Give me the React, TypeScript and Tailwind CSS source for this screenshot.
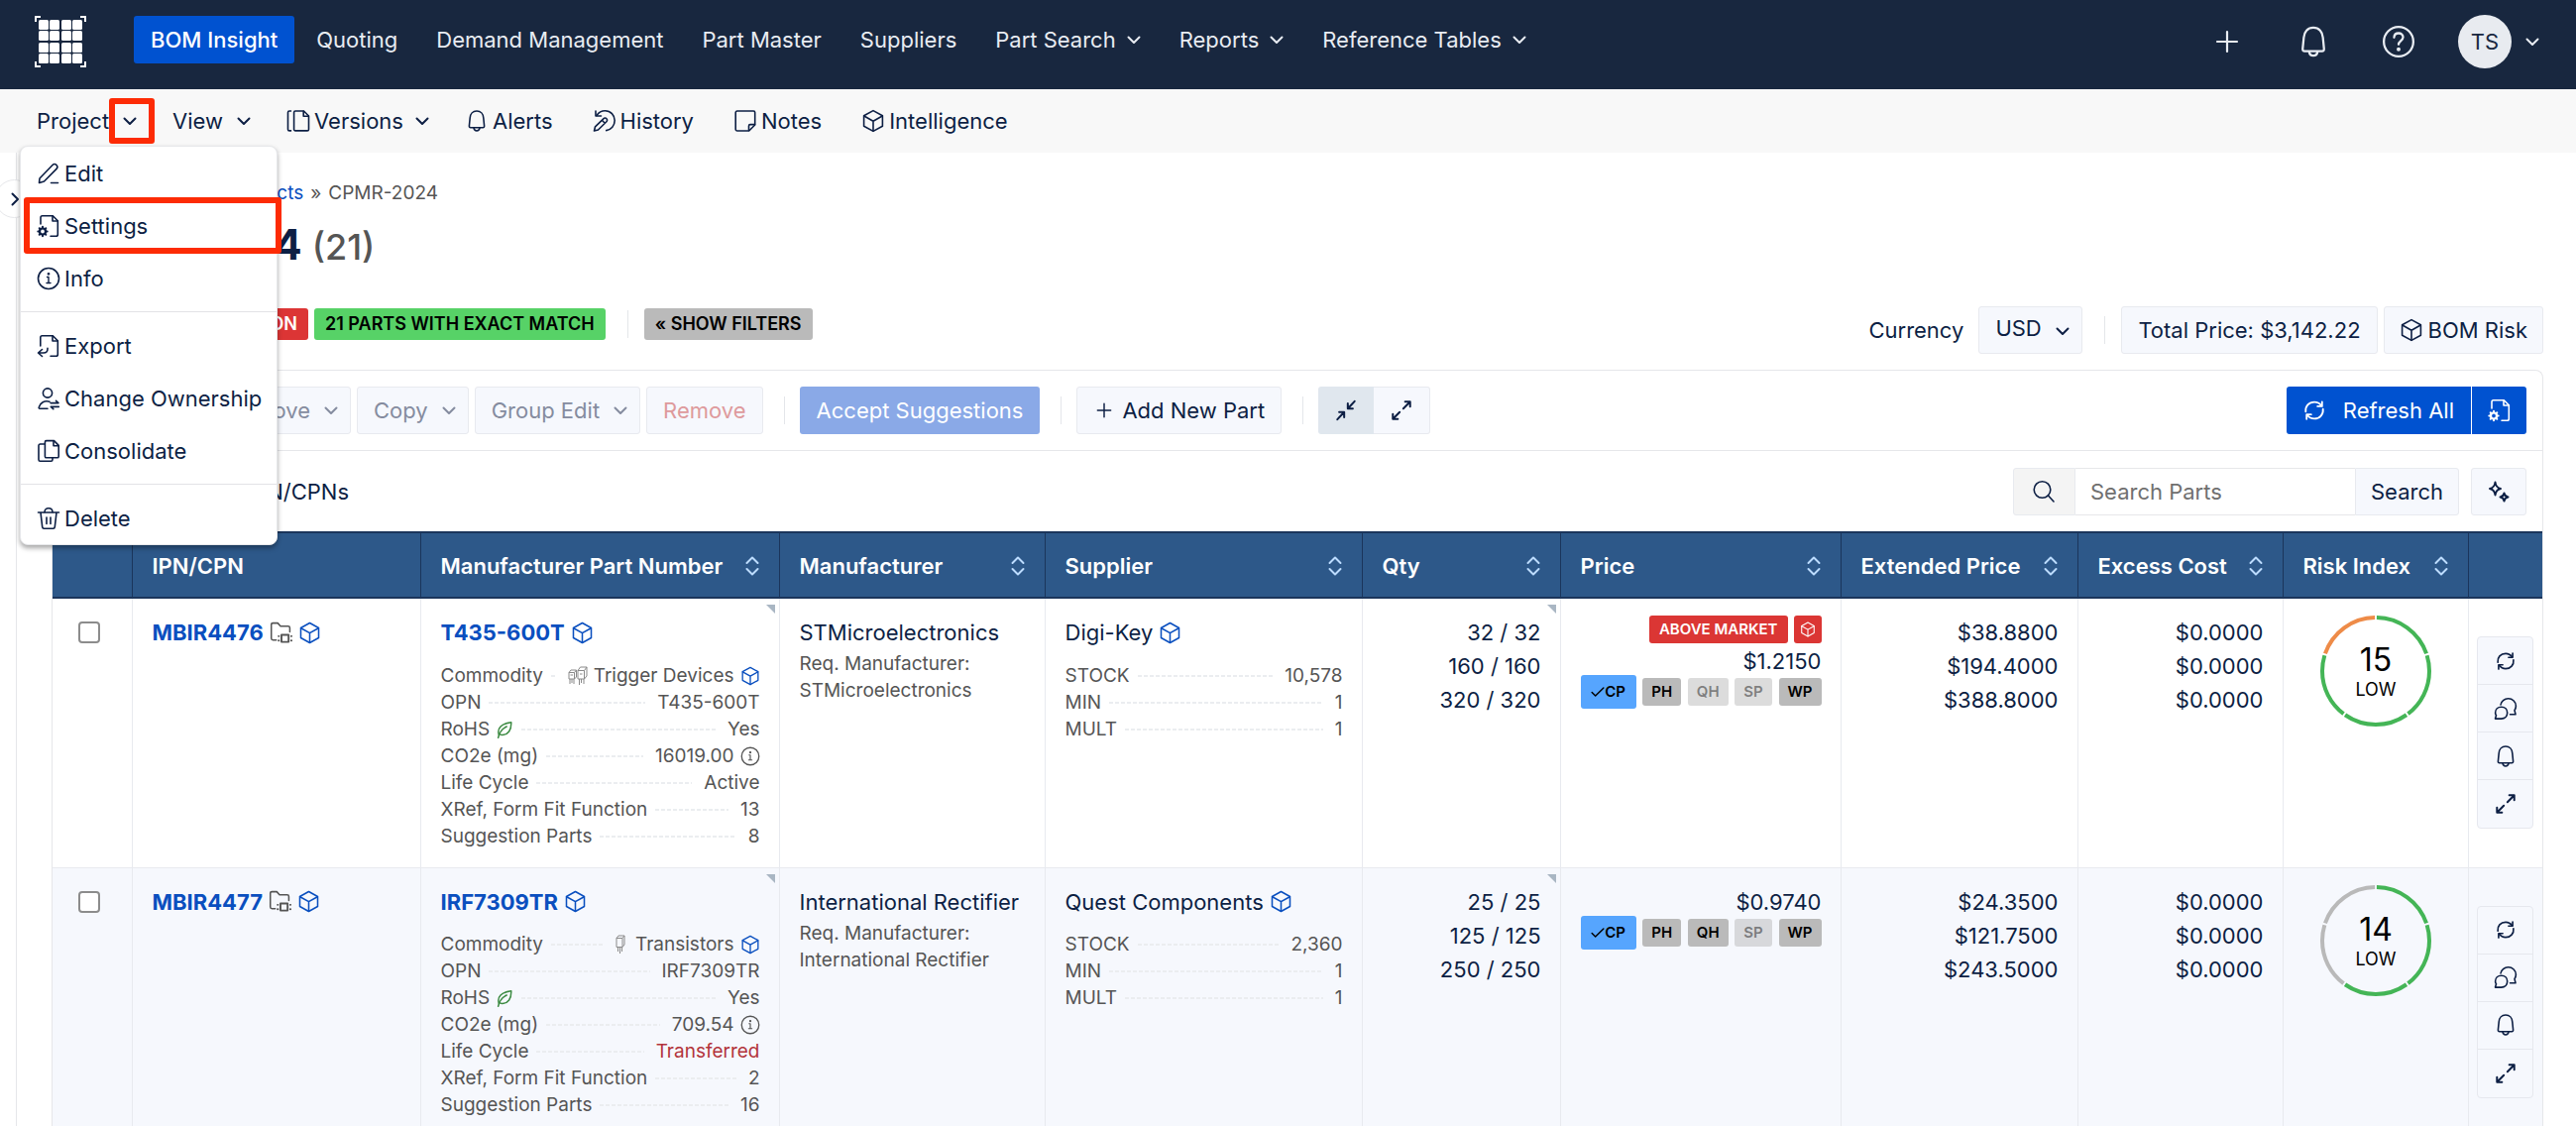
import type { ReactNode } from 'react'

type IconProps = { className?: string }

function Icon({ className = 'size-6', children }: { className?: string; children: ReactNode }) {
  return (
    <svg
      viewBox="0 0 24 24"
      fill="none"
      stroke="currentColor"
      strokeWidth="1.6"
      strokeLinecap="round"
      strokeLinejoin="round"
      aria-hidden="true"
      className={`shrink-0 ${className}`}
    >
      {children}
    </svg>
  )
}

function Chevron({ className = '' }: IconProps) {
  return (
    <svg viewBox="0 0 14 14" fill="none" stroke="currentColor" strokeWidth="2" strokeLinecap="round" strokeLinejoin="round" aria-hidden="true" className={`size-[14px] shrink-0 ${className}`}>
      <path d="M1.500 4.500 7 10l5.500-5.500" />
    </svg>
  )
}

const Cube = ({ className }: IconProps) => (
  <Icon className={className}>
    <path d="M12 1.600 21.400 6.800v10.400L12 22.400 2.600 17.200V6.800z" />
    <path d="M2.800 7 12 12.200 21.200 7M12 12.200v10" />
  </Icon>
)

const Bell = ({ className }: IconProps) => (
  <Icon className={className}>
    <path d="M12 2c-4 0-6.600 3-6.800 7l-.8 8c-.1 1.200.4 1.800 1.400 1.800h12.400c1 0 1.500-.6 1.400-1.800l-.8-8C18.600 5 16 2 12 2z" />
    <path d="M9 19.200c.3 1.800 1.500 2.800 3 2.800s2.700-1 3-2.800" />
  </Icon>
)

const Info = ({ className }: IconProps) => (
  <Icon className={className}>
    <circle cx="12" cy="12" r="10.500" />
    <path d="M10.500 10.500H12v6M10 16.500h4" strokeWidth="1.400" />
    <circle cx="12" cy="7.300" r=".6" fill="currentColor" />
  </Icon>
)

const Pencil = ({ className }: IconProps) => (
  <Icon className={className}>
    <path d="m3 17 13-13.500c1.200-1.200 2.800-1.200 4 0 1.100 1.100 1.100 2.700 0 3.900L7.500 20 2.500 21.400z" />
    <path d="M14.500 21.500h7" />
  </Icon>
)

const FileGear = ({ className }: IconProps) => (
  <Icon className={className}>
    <path d="M4 10V3.500C4 2.500 4.700 1.800 5.700 1.800h10.600l5 5v13.700c0 1-.7 1.800-1.700 1.800H14" />
    <path d="M16 2v5h5.200" />
    <circle cx="6" cy="17.500" r="3" strokeWidth="2.200" />
    <path d="M6 12.800v1.400M6 20.800v1.400M1.300 17.500h1.400M9.300 17.500h1.400M2.700 14.200l1 1M8.300 19.800l1 1M9.300 14.200l-1 1M3.700 19.800l-1 1" strokeWidth="2" />
  </Icon>
)

const FileExport = ({ className }: IconProps) => (
  <Icon className={className}>
    <path d="M3.800 12V3.500c0-1 .7-1.700 1.700-1.700h10.800l5 5v13.700c0 1-.7 1.800-1.700 1.800H14" />
    <path d="M16 2v5h5.200" />
    <path d="M5.500 15.500 1.500 19l4 3.500M1.800 19H7c2.500 0 4-1.500 4-4v-.8" />
  </Icon>
)

const UserSwap = ({ className }: IconProps) => (
  <Icon className={className}>
    <circle cx="11" cy="6.500" r="4.600" />
    <path d="M13 15.200c-5-1.300-9.500.8-10.800 5.800-.2.700.2 1.200.9 1.200H11" />
    <path d="M14 16.600h8l-2.500-2.200M22.300 20.400h-8l2.500 2.200" />
  </Icon>
)

const Copies = ({ className }: IconProps) => (
  <Icon className={className}>
    <path d="M9.800 1.600h7.700l4.700 4.800v11c0 .8-.6 1.400-1.400 1.400H9.800c-.8 0-1.400-.6-1.400-1.400V3c0-.8.6-1.400 1.400-1.400z" />
    <path d="M17 2v4.800h5" />
    <path d="M8 5H3.500C2.700 5 2 5.700 2 6.500v14.300c0 .8.700 1.500 1.500 1.500h11c.8 0 1.500-.7 1.500-1.500V19" />
  </Icon>
)

const Trash = ({ className }: IconProps) => (
  <Icon className={className}>
    <path d="M1.500 6h21M4 6.200l1.700 14.500c.1.900.8 1.500 1.700 1.500h9.200c.9 0 1.600-.6 1.700-1.500L20 6.200" />
    <path d="M8 5.800c0-2.500 1.600-4 4-4s4 1.500 4 4M10 11v6.500M14 11v6.500" />
  </Icon>
)

const Versions = ({ className }: IconProps) => (
  <Icon className={className}>
    <path d="M9 2h8.500l5 5v13.500c0 .8-.6 1.400-1.400 1.400H9c-.8 0-1.400-.6-1.400-1.400v-17C7.600 2.600 8.200 2 9 2z" />
    <path d="M17.200 2.300v5h5M4.500 2H3c-.8 0-1.500.6-1.500 1.500v17c0 .8.700 1.400 1.500 1.400h1.500" />
  </Icon>
)

const History = ({ className }: IconProps) => (
  <Icon className={className}>
    <path d="M4 6.500C6 3.500 9 1.800 12.500 1.800c5.500 0 9.700 4.300 9.700 9.800 0 5-3.500 9.300-8.500 10" />
    <path d="M3 2v5h5.500" />
    <path d="m2.500 17.800 8.300-8c1-1 2.300-1 3.200 0 .8.800.8 2.100-.1 3L5.500 21l-4 1zM9.500 11.500l2.800 2.800" />
  </Icon>
)

const Note = ({ className }: IconProps) => (
  <Icon className={className}>
    <path d="M3.700 2h16.500c.8 0 1.500.7 1.500 1.500V16l-6 6h-12c-.8 0-1.500-.7-1.500-1.500v-17C2.200 2.700 2.900 2 3.700 2z" />
    <path d="M15.500 21.500V17c0-.8.600-1.400 1.400-1.400h4.600" />
  </Icon>
)

const FolderChip = ({ className }: IconProps) => (
  <Icon className={className}>
    <path d="M7 19.500H3.600c-1 0-1.800-.8-1.800-1.800V3.500c0-1 .8-1.800 1.800-1.800h5L11.500 5h8c1 0 1.800.8 1.800 1.800V11" />
    <path d="M12.500 14h7.500v7.500h-7.500zM9.500 15.500h.3M9.500 20h.3M22.800 15.500h.3M22.800 20h.3" strokeWidth="2" />
  </Icon>
)

const Leaf = ({ className }: IconProps) => (
  <Icon className={className}>
    <path d="M4.500 19.500C1.500 10 8 4 21 2.200c.5 10.500-4 17-12.500 17-1.500 0-2.500-.4-3.300-1.200" strokeWidth="2" />
    <path d="M3.500 23C5 16 9 11 15 8" strokeWidth="2" />
  </Icon>
)

const Refresh = ({ className }: IconProps) => (
  <Icon className={className}>
    <path d="M2.500 13.500C1.800 7.500 6 2.800 12 2.800c3.200 0 6 1.500 7.700 4M21.500 10.500c.7 6-3.500 10.700-9.500 10.700-3.200 0-6-1.500-7.700-4" strokeWidth="2" />
    <path d="M20.500 2.500v5h-5M3.500 21.500v-5h5" strokeWidth="2" />
  </Icon>
)

const Chats = ({ className }: IconProps) => (
  <Icon className={className}>
    <path d="M7 8C7.500 4.500 10.800 1.800 14.700 1.800c4.300 0 7.700 3.300 7.700 7.400 0 1.700-.5 3.100-1.400 4.400l1 4.200h-5.500" />
    <path d="M7.700 10.200c3.500 0 6 2.500 6 5.900s-2.500 6-6 6H1.500l1-3.300c-.6-.8-.9-1.700-.9-2.700 0-3.400 2.600-5.900 6.100-5.900z" />
  </Icon>
)

const Expand = ({ className }: IconProps) => (
  <Icon className={className}>
    <path d="M16 2.500h5.500V8M21 3l-7 7M8 21.500H2.500V16M3 21l7-7" strokeWidth="2.200" />
  </Icon>
)

const Collapse = ({ className }: IconProps) => (
  <Icon className={className}>
    <path d="M14 4.500V10h5.500M14.500 9.500 21.500 2M10 19.500V14H4.500M9.500 14.500 2.500 22" strokeWidth="2.200" />
  </Icon>
)

const Plus = ({ className }: IconProps) => (
  <Icon className={className}>
    <path d="M12 2v20M2 12h20" strokeWidth="2.200" />
  </Icon>
)

const Help = ({ className }: IconProps) => (
  <Icon className={className}>
    <circle cx="12" cy="12" r="10.500" />
    <path d="M8.800 9c.1-1.900 1.400-3 3.200-3s3.200 1.200 3.200 2.900c0 2.300-3.200 2.600-3.200 5.100" />
    <circle cx="12" cy="17.500" r=".6" fill="currentColor" />
  </Icon>
)

const Magnifier = ({ className }: IconProps) => (
  <Icon className={className}>
    <circle cx="10.500" cy="10" r="8.300" />
    <path d="m16.500 16 5.500 6" />
  </Icon>
)

const Sparkles = ({ className }: IconProps) => (
  <Icon className={className}>
    <path d="M8.500 2.500c.5 4 2 5.800 5.500 6.500-3.500.7-5 2.500-5.500 6.500C8 11.500 6.500 9.700 3 9c3.500-.7 5-2.500 5.500-6.500z" strokeWidth="2" />
    <path d="M17.500 13.500c.4 2.500 1.400 3.600 4 4-2.600.4-3.600 1.500-4 4-.4-2.500-1.400-3.600-4-4 2.600-.4 3.600-1.500 4-4z" strokeWidth="2" />
  </Icon>
)

const Sorter = () => (
  <svg viewBox="0 0 14 20" fill="none" stroke="#bcdcff" strokeWidth="2" strokeLinecap="round" strokeLinejoin="round" aria-hidden="true" className="h-5 w-[14px] shrink-0">
    <path d="M1.500 7 7 1.500 12.500 7M1.500 13 7 18.500 12.500 13" />
  </svg>
)

// small component sketches shown before the commodity name
function Transistor({ count }: { count: number }) {
  return (
    <svg viewBox={count === 2 ? '0 0 20 20' : '0 0 10 20'} fill="none" stroke="#8a8a8a" strokeWidth="1" aria-hidden="true" className={count === 2 ? 'h-5 w-5 shrink-0' : 'mr-1 h-5 w-[10px] shrink-0'}>
      {count === 2 ? (
        <>
          <path d="M1 6.500 3 4h5.500v7l-2 2H1zM1 6.500h5.500V13M6.500 6.500 8.500 4M2.500 9h2.500M2 13v5M4 13v4M6 13v5" />
          <path d="M10 4.500 12.500 1H19v9l-2.500 3H10zM10 4.500h6.500V13M16.500 4.500 19 1M12 8h2.500M11.500 13v6M13.500 13v4M16 13v5" />
        </>
      ) : (
        <path d="M1 3.500 3 1h6v9l-2 2.500H1zM1 3.500h6v9M7 3.500 9 1M2.500 12.500V17M4.500 12.500V19M6.500 12.500V17" />
      )}
    </svg>
  )
}

function Logo() {
  return (
    <svg viewBox="0 0 52 52" fill="#fff" role="img" aria-label="Home" className="size-[52px] shrink-0">
      {[4, 15, 27, 38].map(y =>
        [4, 15, 27, 38].map(x => <rect key={`${x}-${y}`} x={x} y={y} width="10" height="10" rx="1.500" />),
      )}
      <path d="M1 6V1h5M46 1h5v5M51 46v5h-5M6 51H1v-5" fill="none" stroke="#fff" strokeWidth="2" />
    </svg>
  )
}

const topLinks = [
  { label: 'Quoting' },
  { label: 'Demand Management' },
  { label: 'Part Master' },
  { label: 'Suppliers' },
  { label: 'Part Search', menu: true },
  { label: 'Reports', menu: true },
  { label: 'Reference Tables', menu: true },
]

function TopBar() {
  return (
    <header className="flex h-[90px] items-start bg-[#18273f] pt-4 pl-[35px] pr-[37px] text-[#e8ecf2]">
      <Logo />
      <nav className="ml-12 flex gap-[5px]">
        <a href="#bom" className="flex h-12 items-center rounded-[3px] bg-[#0052d0] px-[17px] font-medium text-white">BOM Insight</a>
        {topLinks.map(link => (
          <a key={link.label} href="#nav" className="flex h-12 items-center px-[17px]">
            {link.label}
            {link.menu && <Chevron className="ml-[11px]" />}
          </a>
        ))}
      </nav>
      <div className="ml-auto flex h-[52px] items-center">
        <button type="button" aria-label="Create"><Plus className="size-6" /></button>
        <button type="button" aria-label="Notifications" className="ml-[58px]"><Bell className="size-[34px]" /></button>
        <button type="button" aria-label="Help" className="ml-[52px]"><Help className="size-[34px]" /></button>
        <button type="button" aria-label="Account" className="ml-[43px] flex items-center gap-[14px]">
          <span className="flex size-[54px] items-center justify-center rounded-full bg-[#e8ebf0] text-[#18273f]">TS</span>
          <Chevron />
        </button>
      </div>
    </header>
  )
}

function MenuItem({ icon, label, marked }: { icon: ReactNode; label: string; marked?: boolean }) {
  return (
    <li className="relative">
      <button type="button" className="flex h-[53px] w-full items-center gap-1 pl-4">
        {icon}
        {label}
      </button>
      {marked && <span className="pointer-events-none absolute -top-0.5 -right-[5px] -bottom-0.5 left-[3px] rounded-[3px] border-6 border-[#fd2b05]" />}
    </li>
  )
}

function ProjectMenu() {
  return (
    <ul className="absolute top-[57px] -left-[17px] z-10 w-[260px] rounded-lg border border-[#e6e7ea] bg-white shadow-[0_3px_5px_rgba(0,0,0,0.35)]">
      <MenuItem icon={<Pencil />} label="Edit" />
      <MenuItem icon={<FileGear />} label="Settings" marked />
      <MenuItem icon={<Info />} label="Info" />
      <li className="my-[7px] border-t border-[#e3e3e6]" />
      <MenuItem icon={<FileExport />} label="Export" />
      <MenuItem icon={<UserSwap />} label="Change Ownership" />
      <MenuItem icon={<Copies />} label="Consolidate" />
      <li className="my-[7px] border-t border-[#e3e3e6]" />
      <MenuItem icon={<Trash />} label="Delete" />
    </ul>
  )
}

function SubBar() {
  return (
    <div className="flex h-16 items-center gap-9 bg-[#f8f8f8] pl-[37px]">
      <div className="relative flex h-16 items-center">
        <button type="button" aria-expanded="true" className="flex items-center">
          Project
          <span className="relative ml-3.5">
            <Chevron />
            <span className="pointer-events-none absolute -inset-y-4 -right-[18px] -left-3.5 rounded-[3px] border-6 border-[#fd2b05]" />
          </span>
        </button>
        <ProjectMenu />
      </div>
      <button type="button" className="flex items-center">View<Chevron className="ml-3.5" /></button>
      <button type="button" className="flex items-center gap-1"><Versions />Versions<Chevron className="ml-2" /></button>
      <button type="button" className="flex items-center gap-1"><Bell />Alerts</button>
      <button type="button" className="ml-1 flex items-center gap-1"><History />History</button>
      <button type="button" className="ml-1 flex items-center gap-1"><Note />Notes</button>
      <button type="button" className="ml-1 flex items-center gap-1"><Cube />Intelligence</button>
    </div>
  )
}

const softButton = 'flex h-12 items-center rounded-[3px] border border-[#e8eaef] bg-[#f6f8fd]'

function Separator() {
  return <span className="h-7 w-px shrink-0 bg-[#e4e6ea]" />
}

function Summary() {
  return (
    <div className="mt-9 flex items-start justify-between">
      <div className="mt-0.5 flex h-8 items-center text-[18px] font-semibold">
        <span className="w-[259px] rounded-[3px] bg-[#dc3535] pr-[11px] text-right leading-8 text-white">1 PART WITH SUGGESTION</span>
        <span className="ml-1.5 rounded-[3px] bg-[#57d267] px-[11px] leading-8 text-black">21 PARTS WITH EXACT MATCH</span>
        <span className="ml-[22px] flex"><Separator /></span>
        <button type="button" className="ml-4 rounded-[3px] bg-[#bababa] px-[11px] leading-8 text-black">« SHOW FILTERS</button>
      </div>
      <div className="flex items-center">
        <label htmlFor="currency" className="mr-[15px]">Currency</label>
        <div className="relative">
          <select id="currency" className={`${softButton} w-[105px] appearance-none pl-4 pb-1 outline-none`} defaultValue="USD">
            <option>USD</option>
          </select>
          <Chevron className="pointer-events-none absolute top-[18px] right-[13px]" />
        </div>
        <span className="mr-4 ml-[22px] flex"><Separator /></span>
        <button type="button" className={`${softButton} px-4`}>Total Price: $3,142.22</button>
        <button type="button" className={`${softButton} ml-1.5 gap-[5px] px-[15px]`}><Cube />BOM Risk</button>
      </div>
    </div>
  )
}

function Toolbar() {
  return (
    <div className="flex items-center border-b border-[#e6e7ea] px-4 py-4">
      <div className="flex gap-1.5 text-[#858c9f]">
        <button type="button" disabled className={`${softButton} w-[150px] px-4`}>Add Part</button>
        <button type="button" disabled className={`${softButton} w-[129px] justify-end gap-[14px] pr-3`}>Move<Chevron /></button>
        <button type="button" disabled className={`${softButton} gap-[14px] pl-4 pr-3`}>Copy<Chevron /></button>
        <button type="button" disabled className={`${softButton} gap-[14px] pl-4 pr-3`}>Group Edit<Chevron /></button>
        <button type="button" disabled className={`${softButton} px-4 text-[#de9a9c]`}>Remove</button>
      </div>
      <span className="mr-[15px] ml-[21px] flex"><Separator /></span>
      <button type="button" disabled className="h-12 rounded-[3px] bg-[#8aa9e7] px-[17px] text-white">Accept Suggestions</button>
      <span className="mr-[15px] ml-[21px] flex"><Separator /></span>
      <button type="button" className={`${softButton} gap-2.5 px-4 pl-[19px]`}><Plus className="size-4" />Add New Part</button>
      <span className="mr-[15px] ml-[21px] flex"><Separator /></span>
      <button type="button" aria-label="Collapse rows" className="flex h-12 w-14 items-center justify-center rounded-l-[3px] bg-[#e0e7ee]"><Collapse className="size-[22px]" /></button>
      <button type="button" aria-label="Expand rows" className="flex h-12 w-[57px] items-center justify-center rounded-r-[3px] border border-l-0 border-[#e8eaef] bg-[#f6f8fd]"><Expand className="size-[22px]" /></button>
      <div className="ml-auto flex gap-px text-white">
        <button type="button" className="flex h-12 items-center gap-[18px] rounded-l-[3px] bg-[#0052d0] px-[17px]"><Refresh className="size-[22px]" />Refresh All</button>
        <button type="button" aria-label="Refresh settings" className="flex h-12 w-[55px] items-center justify-center rounded-r-[3px] bg-[#0052d0]"><FileGear /></button>
      </div>
    </div>
  )
}

function SearchRow() {
  return (
    <div className="flex items-center justify-between px-4 pt-[17px] pb-4">
      <label className="flex w-[283px] items-center justify-end gap-3">
        <input type="checkbox" className="size-[22px]" />
        Group by IPN/CPNs
      </label>
      <form className="flex" onSubmit={e => e.preventDefault()}>
        <label htmlFor="search" className="flex h-12 w-[63px] items-center justify-center rounded-l-[3px] border border-[#e8eaef] bg-[#f4f4f4]">
          <Magnifier />
        </label>
        <input id="search" aria-label="Search parts" placeholder="Search Parts" className="h-12 w-[282px] border-y border-[#e6e7ea] px-[15px] outline-none placeholder:text-[#707070]" />
        <button type="submit" className={`${softButton} rounded-l-none px-[15px]`}>Search</button>
        <button type="button" aria-label="Assistant" className={`${softButton} ml-3 w-14 justify-center`}><Sparkles /></button>
      </form>
    </div>
  )
}

const parts = [
  {
    ipn: 'MBIR4476',
    mpn: 'T435-600T',
    commodity: 'Trigger Devices',
    sketch: 2,
    co2: '16019.00',
    lifeCycle: 'Active',
    xref: '13',
    suggestions: '8',
    manufacturer: 'STMicroelectronics',
    supplier: 'Digi-Key',
    stock: '10,578',
    qty: ['32 / 32', '160 / 160', '320 / 320'],
    aboveMarket: true,
    price: '$1.2150',
    off: ['QH', 'SP'],
    extended: ['$38.8800', '$194.4000', '$388.8000'],
    risk: 15,
    ring: ['#44b556', '#44b556', '#44b556', '#44b556', '#ee8b48'],
  },
  {
    ipn: 'MBIR4477',
    mpn: 'IRF7309TR',
    commodity: 'Transistors',
    sketch: 1,
    co2: '709.54',
    lifeCycle: 'Transferred',
    xref: '2',
    suggestions: '16',
    manufacturer: 'International Rectifier',
    supplier: 'Quest Components',
    stock: '2,360',
    qty: ['25 / 25', '125 / 125', '250 / 250'],
    aboveMarket: false,
    price: '$0.9740',
    off: ['SP'],
    extended: ['$24.3500', '$121.7500', '$243.5000'],
    risk: 14,
    ring: ['#44b556', '#44b556', '#44b556', '#b9b9b9', '#b9b9b9'],
  },
]

const columns = [
  { label: '', width: 'w-[80px]' },
  { label: 'IPN/CPN', width: 'w-[291px]' },
  { label: 'Manufacturer Part Number', width: 'w-[362px]', sort: true },
  { label: 'Manufacturer', width: 'w-[268px]', sort: true },
  { label: 'Supplier', width: 'w-[320px]', sort: true },
  { label: 'Qty', width: 'w-[200px]', sort: true },
  { label: 'Price', width: 'w-[283px]', sort: true },
  { label: 'Extended Price', width: 'w-[239px]', sort: true },
  { label: 'Excess Cost', width: 'w-[207px]', sort: true },
  { label: 'Risk Index', width: 'w-[187px]', sort: true },
  { label: '', width: 'w-[75px]' },
]

function Detail({ label, children }: { label: ReactNode; children: ReactNode }) {
  return (
    <div className="flex h-[27px] items-center text-[19px] text-[#555]">
      <dt className="flex items-center gap-1.5 whitespace-nowrap">{label}</dt>
      <span className="mr-3 ml-2 h-0.5 flex-1 bg-[repeating-linear-gradient(90deg,#ebedf0_0_4px,transparent_4px_6px)]" />
      <dd className="flex items-center gap-1.5 whitespace-nowrap">{children}</dd>
    </div>
  )
}

function Corner() {
  return (
    <svg viewBox="0 0 9 9" aria-hidden="true" className="absolute top-1.5 right-1 size-[9px] fill-[#a9b6c3]">
      <path d="M0 0h9v9z" />
    </svg>
  )
}

function Ring({ colors, score }: { colors: string[]; score: number }) {
  return (
    <div className="relative mx-auto size-28">
      <svg viewBox="0 0 112 112" fill="none" strokeWidth="4" aria-hidden="true" className="size-28">
        {colors.map((color, i) => (
          <circle key={i} cx="56" cy="56" r="54" pathLength="360" stroke={color} strokeDasharray="70 290" strokeDashoffset={89 - i * 72} />
        ))}
      </svg>
      <div className="absolute inset-0 flex flex-col items-center justify-center pt-1.5 text-black">
        <span className="text-[32px] leading-8">{score}</span>
        <span className="text-[18px] leading-7">LOW</span>
      </div>
    </div>
  )
}

function Lines({ values }: { values: string[] }) {
  return (
    <>
      {values.map((value, i) => (
        <div key={i} className="text-right leading-[34px]">{value}</div>
      ))}
    </>
  )
}

const rowActions = [
  { label: 'Refresh', icon: <Refresh className="size-5" /> },
  { label: 'Comments', icon: <Chats className="size-6" /> },
  { label: 'Alerts', icon: <Bell className="size-6" /> },
  { label: 'Open', icon: <Expand className="size-[22px]" /> },
]

const cell = 'relative h-[272px] border-r border-[#e8eaef] pr-[19px] pl-5 pt-[17px] align-top'

function PartRow({ part }: { part: (typeof parts)[number] }) {
  return (
    <tr className="border-b border-[#e8eaef] even:bg-[#f6f8fd]">
      <td className={cell}>
        <input type="checkbox" aria-label={`Select ${part.ipn}`} className="mt-1.5 ml-1.5 block size-[22px] appearance-none rounded-[4px] border-2 border-[#8c8c8c] bg-white" />
      </td>
      <td className={cell}>
        <div className="flex h-[34px] items-center gap-1.5">
          <a href="#part" className="font-bold text-[#0a4fbf]">{part.ipn}</a>
          <FolderChip className="size-[23px] text-[#555]" />
          <Cube className="size-[23px] text-[#0a4fbf]" />
        </div>
      </td>
      <td className={cell}>
        <Corner />
        <div className="mb-[13px] flex h-[34px] items-center gap-1.5">
          <a href="#part" className="font-bold text-[#0a4fbf]">{part.mpn}</a>
          <Cube className="size-[23px] text-[#0a4fbf]" />
        </div>
        <dl>
          <Detail label="Commodity">
            <Transistor count={part.sketch} />
            {part.commodity}
            <Cube className="size-5 text-[#0a4fbf]" />
          </Detail>
          <Detail label="OPN">{part.mpn}</Detail>
          <Detail label={<>RoHS <Leaf className="size-[18px] text-[#3d8b43]" /></>}>Yes</Detail>
          <Detail label="CO2e (mg)">{part.co2}<Info className="size-5" /></Detail>
          <Detail label="Life Cycle">
            {part.lifeCycle === 'Transferred' ? <span className="text-[#b3343b]">Transferred</span> : part.lifeCycle}
          </Detail>
          <Detail label="XRef, Form Fit Function">{part.xref}</Detail>
          <Detail label="Suggestion Parts">{part.suggestions}</Detail>
        </dl>
      </td>
      <td className={cell}>
        <div className="leading-[34px] whitespace-nowrap">{part.manufacturer}</div>
        <div className="mt-px text-[19px] leading-[27px] text-[#555]">Req. Manufacturer:<br />{part.manufacturer}</div>
      </td>
      <td className={cell}>
        <div className="mb-[13px] flex h-[34px] items-center gap-1.5">{part.supplier}<Cube className="size-[23px] text-[#0a4fbf]" /></div>
        <dl>
          <Detail label="STOCK">{part.stock}</Detail>
          <Detail label="MIN">1</Detail>
          <Detail label="MULT">1</Detail>
        </dl>
      </td>
      <td className={cell}><Corner /><Lines values={part.qty} /></td>
      <td className={cell}>
        {part.aboveMarket ? (
          <div className="mb-1 flex justify-end gap-1.5">
            <span className="rounded-[3px] bg-[#db3634] px-2.5 text-[15px] leading-7 font-semibold text-white">ABOVE MARKET</span>
            <span className="flex size-7 items-center justify-center rounded-[3px] bg-[#db3634] text-white"><Cube className="size-4" /></span>
          </div>
        ) : (
          <div className="h-[3px]" />
        )}
        <div className="text-right leading-7">{part.price}</div>
        <div className="flex items-center justify-between text-[15px] font-semibold text-black">
          <button type="button" className="flex h-[34px] w-14 items-center justify-center rounded-[3px] bg-[#56a5fe]">
            <Icon className="size-[14px]"><path d="m2 13 6 6L22 5" strokeWidth="2.500" /></Icon>
            CP
          </button>
          {['PH', 'QH', 'SP', 'WP'].map(code => (
            <button key={code} type="button" disabled={part.off.includes(code)} className="h-7 rounded-[3px] bg-[#bababa] px-[9px] leading-7 disabled:opacity-50">{code}</button>
          ))}
        </div>
      </td>
      <td className={cell}><Lines values={part.extended} /></td>
      <td className={cell}><Lines values={['$0.0000', '$0.0000', '$0.0000']} /></td>
      <td className={cell}><Ring colors={part.ring} score={part.risk} /></td>
      <td className="pt-[38px] align-top">
        <div className="mx-auto w-[57px] divide-y divide-[#e6e8ee] rounded-[4px] border border-[#e6e8ee] bg-[#f6f8fd]">
          {rowActions.map(action => (
            <button key={action.label} type="button" aria-label={action.label} className="flex h-12 w-full items-center justify-center">{action.icon}</button>
          ))}
        </div>
      </td>
    </tr>
  )
}

function PartsTable() {
  return (
    <table className="w-full table-fixed border-collapse">
      <thead>
        <tr className="h-[66px] border-y-2 border-[#1b355b] bg-[#2d5889] text-white">
          {columns.map((column, i) => (
            <th key={i} scope="col" className={`${column.width} border-r border-[#1b355b] px-5 pt-0.5 text-left font-semibold last:border-r-0`}>
              <div className="flex items-center justify-between whitespace-nowrap">
                {column.label}
                {column.sort && <button type="button" aria-label={`Sort by ${column.label}`}><Sorter /></button>}
              </div>
            </th>
          ))}
        </tr>
      </thead>
      <tbody>
        {parts.map(part => <PartRow key={part.ipn} part={part} />)}
      </tbody>
    </table>
  )
}

export default function App() {
  return (
    <div className="flex h-screen flex-col overflow-hidden bg-white font-[Inter,sans-serif] text-[22px] leading-[34px] text-[#0d1f44]">
      <TopBar />
      <SubBar />
      <div className="flex min-h-0 flex-1">
        <aside className="relative w-[17px] shrink-0 border-r border-[#e6e7ea]">
          <button type="button" aria-label="Open sidebar" className="absolute top-[27px] -left-[5px] flex size-[39px] items-center justify-center rounded-full border border-[#e6e7ea] bg-white">
            <Chevron className="-rotate-90" />
          </button>
        </aside>
        <main className="min-w-0 flex-1 pt-[27px] pr-[33px] pl-[35px]">
          <nav className="flex h-7 w-[390px] items-center justify-end gap-[7px] text-[19px] text-[#555]">
            <a href="#home" className="text-[#0a4fbf]">BOM Insight</a>
            <span>»</span>
            <a href="#projects" className="text-[#0a4fbf]">Projects</a>
            <span>»</span>
            <span>CPMR-2024</span>
          </nav>
          <h1 className="mt-3 text-[42px] leading-[52px] font-bold">
            CPMR-2024 <span className="text-[36px] leading-9 font-medium text-[#555]">(21)</span>
          </h1>
          <Summary />
          <section className="mt-4 rounded-t-lg border border-b-0 border-[#e6e7ea]">
            <Toolbar />
            <SearchRow />
            <PartsTable />
          </section>
        </main>
      </div>
    </div>
  )
}
